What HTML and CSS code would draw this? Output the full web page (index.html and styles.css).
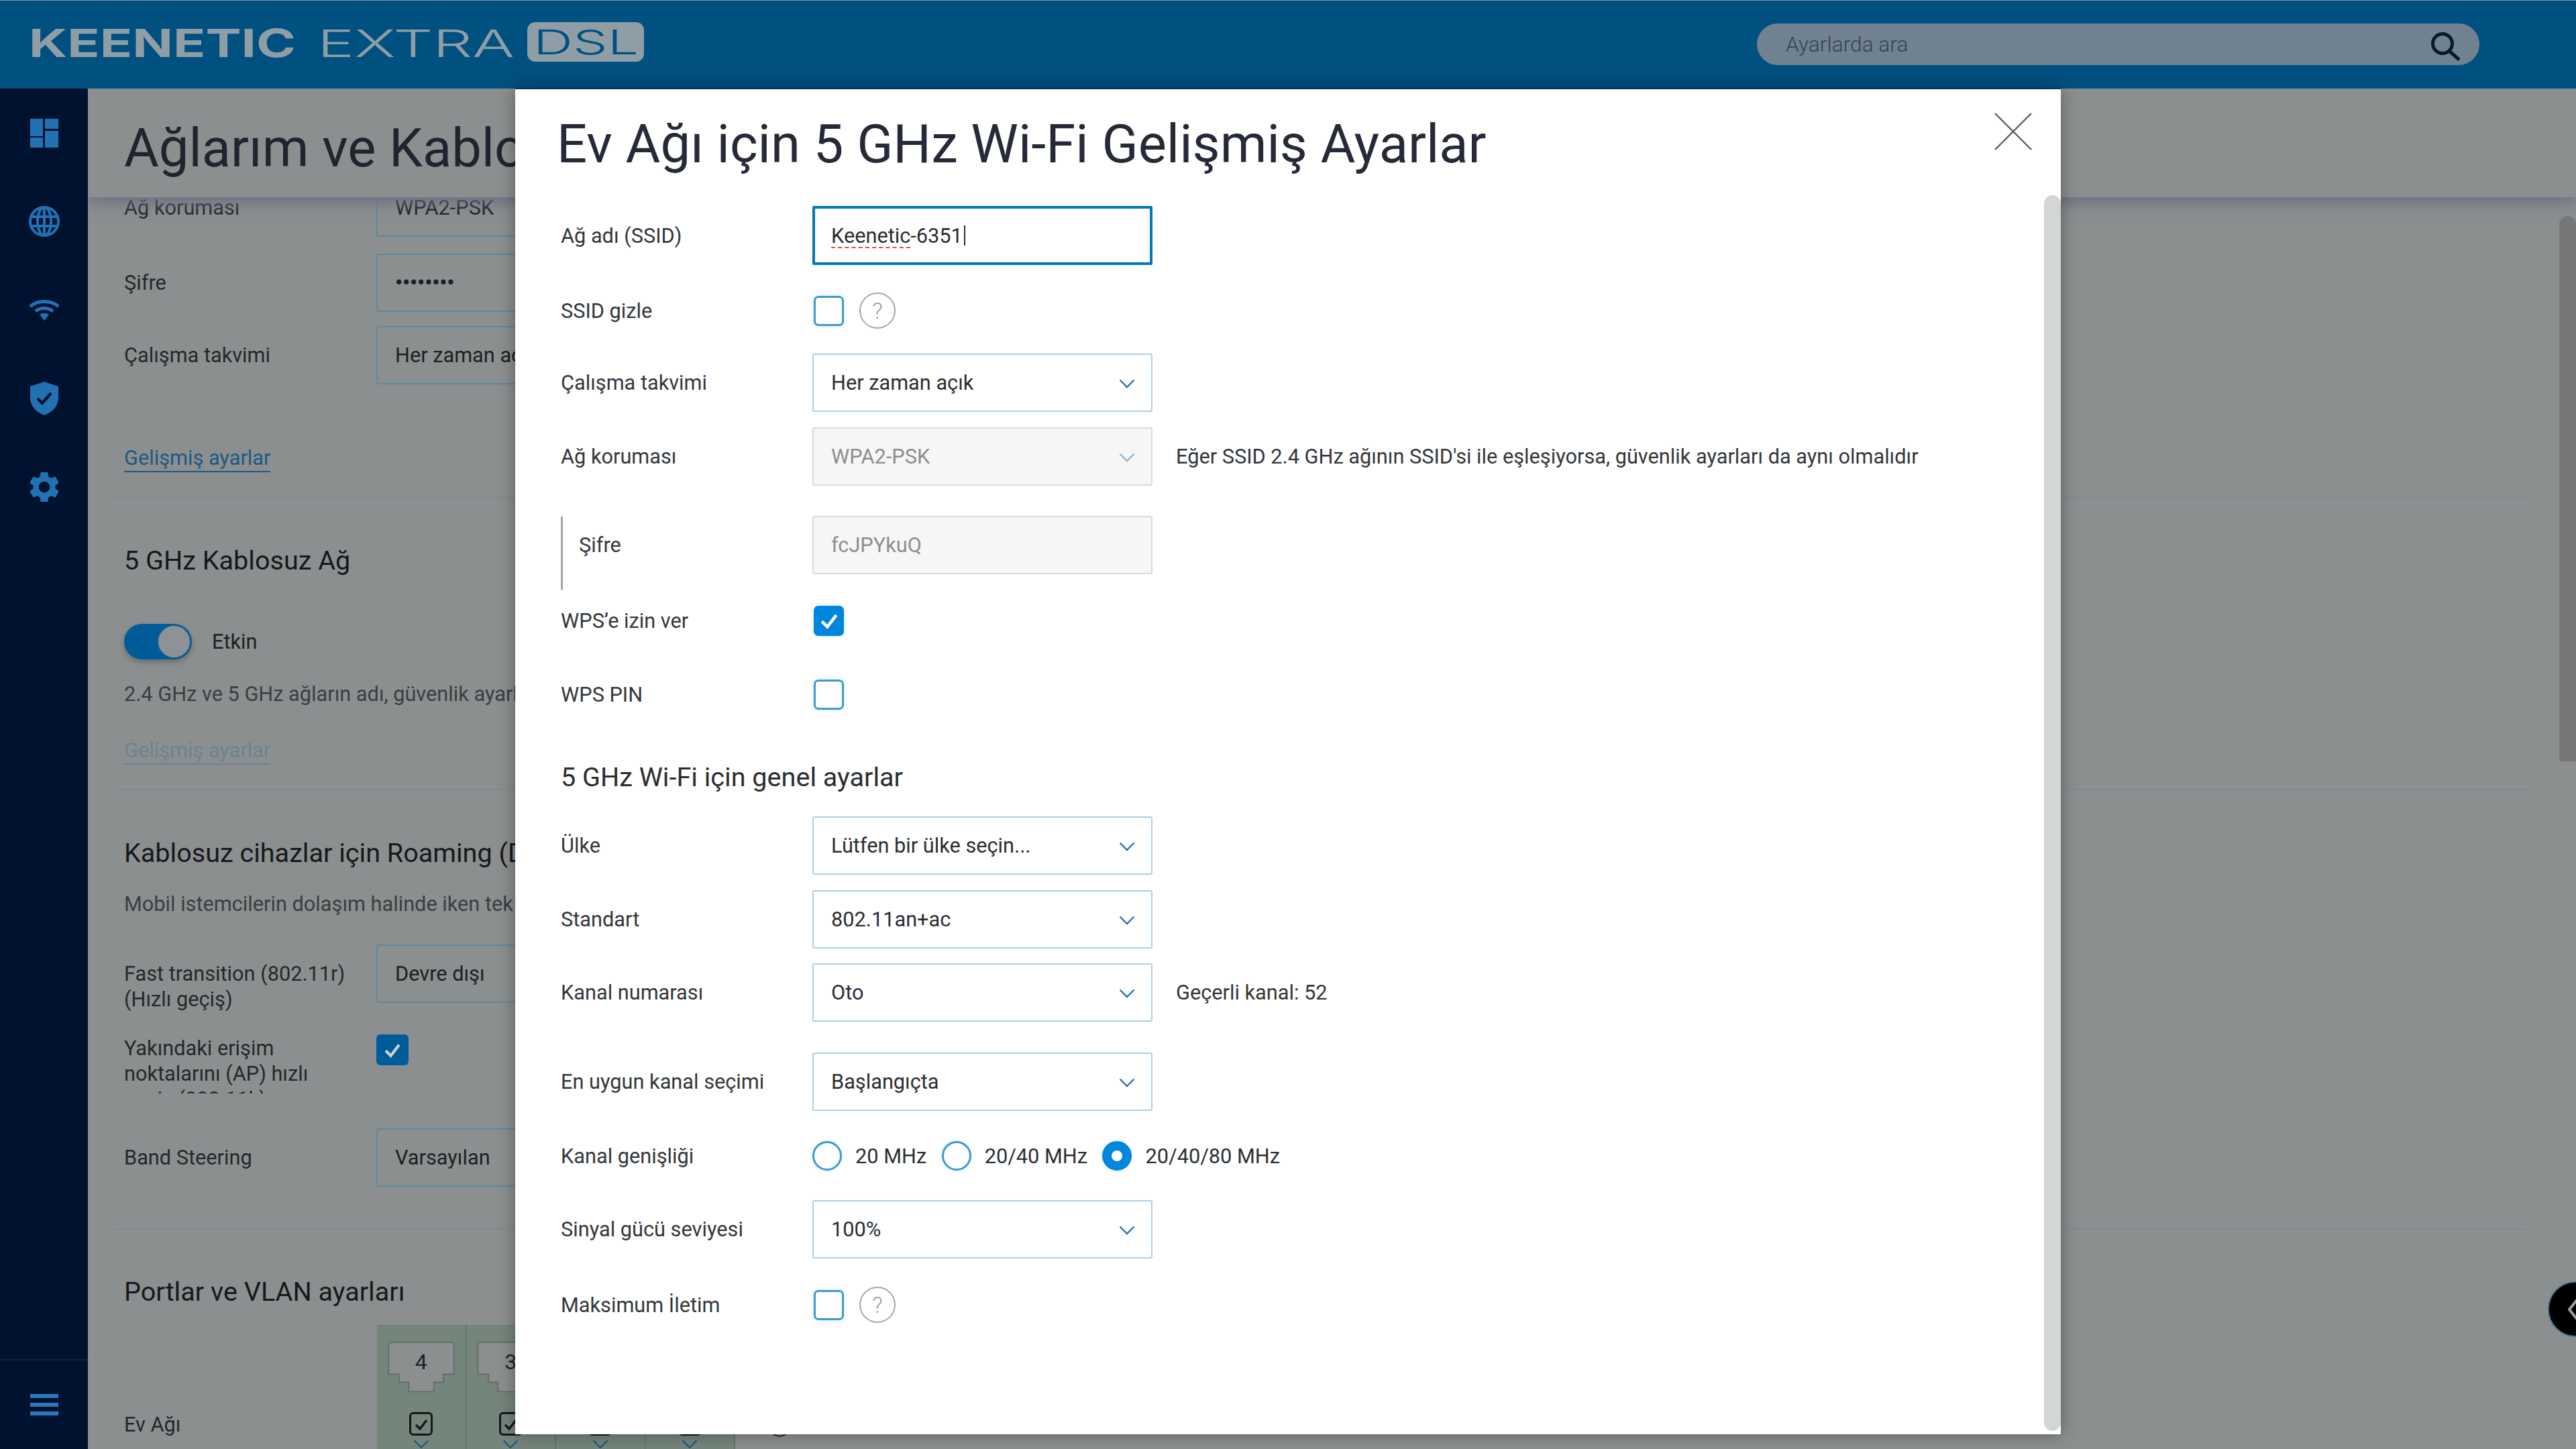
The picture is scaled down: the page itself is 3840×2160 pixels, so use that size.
FILE: index.html
```html
<!DOCTYPE html>
<html lang="tr">
<head>
<meta charset="utf-8">
<title>Keenetic</title>
<link rel="stylesheet" href="styles.css">
</head>
<body>
<svg class="defs" width="0" height="0">
  <symbol id="chev" viewBox="0 0 24 14"><polyline points="1.5,1.5 12,12 22.5,1.5" fill="none" stroke="currentColor" stroke-width="2.4"/></symbol>
  <symbol id="tick" viewBox="0 0 24 24"><polyline points="4,13 10,19 20,6" fill="none" stroke="currentColor" stroke-width="3.4"/></symbol>
</svg>
<div class="app">
  <header class="topbar">
    <svg class="logo" width="920" height="60" viewBox="0 0 920 60">
      <text class="logo-main" x="-2" y="52" textLength="398" lengthAdjust="spacingAndGlyphs">KEENETIC</text>
      <text class="logo-sub" x="428" y="52" textLength="294" lengthAdjust="spacingAndGlyphs">EXTRA</text>
      <rect class="logo-pill" x="741" y="0" width="174" height="59" rx="12"/>
      <text class="logo-dsl" x="750" y="48" textLength="157" lengthAdjust="spacingAndGlyphs">DSL</text>
    </svg>
    <div class="search">
      <span class="search-text">Ayarlarda ara</span>
      <svg class="search-icon" width="46" height="44" viewBox="0 0 46 44"><circle cx="18" cy="18" r="14.5" fill="none" stroke="currentColor" stroke-width="5"/><line x1="28" y1="29" x2="43" y2="42" stroke="currentColor" stroke-width="5"/></svg>
    </div>
  </header>
  <div class="body">
    <nav class="sidebar">
      <a class="nav-item"><svg width="42" height="43" viewBox="0 0 42 43"><rect x="0" y="0" width="19" height="26"/><rect x="0" y="28" width="19" height="15"/><rect x="22" y="0" width="20" height="15"/><rect x="22" y="18" width="20" height="25"/></svg></a>
      <a class="nav-item"><svg width="46" height="46" viewBox="0 0 46 46"><g fill="none" stroke="currentColor" stroke-width="4"><circle cx="23" cy="23" r="21"/><ellipse cx="23" cy="23" rx="10" ry="21"/><line x1="3" y1="16" x2="43" y2="16"/><line x1="3" y1="30" x2="43" y2="30"/><line x1="23" y1="2" x2="23" y2="44"/></g></svg></a>
      <a class="nav-item"><svg width="46" height="32" viewBox="0 0 46 32"><g fill="none" stroke="currentColor" stroke-width="5"><path d="M2 11 C13 1 33 1 44 11"/><path d="M10 18 C17 12 29 12 36 18"/></g><path class="fill" d="M16 23 C20 20 26 20 30 23 L23 32 Z"/></svg></a>
      <a class="nav-item"><svg width="42" height="50" viewBox="0 0 42 50"><path class="fill" d="M21 0 L42 7 V24 C42 37 32 46 21 50 C10 46 0 37 0 24 V7 Z"/><polyline points="11,25 18,32 31,17" fill="none" stroke="#00122f" stroke-width="4.5"/></svg></a>
      <a class="nav-item"><svg width="46" height="46" viewBox="2 2 20 20"><path class="fill" d="M19.14 12.94c.04-.3.06-.61.06-.94 0-.32-.02-.64-.07-.94l2.03-1.58c.18-.14.23-.41.12-.61l-1.92-3.32c-.12-.22-.37-.29-.59-.22l-2.39.96c-.5-.38-1.03-.7-1.62-.94l-.36-2.54c-.04-.24-.24-.41-.48-.41h-3.84c-.24 0-.43.17-.47.41l-.36 2.54c-.59.24-1.13.57-1.62.94l-2.39-.96c-.22-.08-.47 0-.59.22L2.74 8.87c-.12.21-.08.47.12.61l2.03 1.58c-.05.3-.09.63-.09.94s.02.64.07.94l-2.03 1.58c-.18.14-.23.41-.12.61l1.92 3.32c.12.22.37.29.59.22l2.39-.96c.5.38 1.03.7 1.62.94l.36 2.54c.05.24.24.41.48.41h3.84c.24 0 .44-.17.47-.41l.36-2.54c.59-.24 1.13-.56 1.62-.94l2.39.96c.22.08.47 0 .59-.22l1.92-3.32c.12-.22.07-.47-.12-.61l-2.01-1.58zM12 15.6c-1.98 0-3.6-1.62-3.6-3.6s1.62-3.6 3.6-3.6 3.6 1.62 3.6 3.6-1.62 3.6-3.6 3.6z"/></svg></a>
      <div class="nav-foot"><span class="burger"></span></div>
    </nav>
    <main class="page">
      <div class="page-head"><h1 class="page-title">Ağlarım ve Kablosuz Ağ</h1></div>
      <div class="page-scroll">
        <div class="bg-row first"><label class="bg-label">Ağ koruması</label><div class="bg-input">WPA2-PSK</div></div>
        <div class="bg-row r25"><label class="bg-label">Şifre</label><div class="bg-input dots">••••••••</div></div>
        <div class="bg-row r21"><label class="bg-label">Çalışma takvimi</label><div class="bg-input">Her zaman açık</div></div>
        <a class="bg-link l92">Gelişmiş ayarlar</a>
        <hr class="bg-rule">
        <h3 class="bg-h3">5 GHz Kablosuz Ağ</h3>
        <div class="toggle-row"><span class="toggle"><span class="knob"></span></span><span class="toggle-label">Etkin</span></div>
        <p class="bg-p p33">2.4 GHz ve 5 GHz ağların adı, güvenlik ayarları ve şifresi aynı olmalıdır</p>
        <a class="bg-link faded">Gelişmiş ayarlar</a>
        <hr class="bg-rule">
        <h3 class="bg-h3">Kablosuz cihazlar için Roaming (Dolaşım)</h3>
        <p class="bg-p p32">Mobil istemcilerin dolaşım halinde iken tek bir ağda kalması için</p>
        <div class="bg-row r41"><label class="bg-label two-line">Fast transition (802.11r)<br>(Hızlı geçiş)</label><div class="bg-input">Devre dışı</div></div>
        <div class="bg-row clip"><label class="bg-label">Yakındaki erişim<br>noktalarını (AP) hızlı<br>geçiş (802.11k)</label><span class="bg-check"><svg width="30" height="30"><use href="#tick"/></svg></span></div>
        <div class="bg-row r52"><label class="bg-label">Band Steering</label><div class="bg-input">Varsayılan</div></div>
        <hr class="bg-rule r62">
        <h3 class="bg-h3 h68">Portlar ve VLAN ayarları</h3>
        <div class="ports">
          <span class="ports-label">Ev Ağı</span>
          <div class="port"><svg class="rj" width="102" height="78" viewBox="0 0 102 78"><path d="M6 2 H96 Q100 2 100 6 V50 H84 V62 H70 V76 H32 V62 H18 V50 H2 V6 Q2 2 6 2 Z"/></svg><span class="port-num">4</span><span class="port-check"><svg width="24" height="24"><use href="#tick"/></svg></span><svg class="port-chev" width="24" height="14"><use href="#chev"/></svg></div>
          <div class="port"><svg class="rj" width="102" height="78" viewBox="0 0 102 78"><path d="M6 2 H96 Q100 2 100 6 V50 H84 V62 H70 V76 H32 V62 H18 V50 H2 V6 Q2 2 6 2 Z"/></svg><span class="port-num">3</span><span class="port-check"><svg width="24" height="24"><use href="#tick"/></svg></span><svg class="port-chev" width="24" height="14"><use href="#chev"/></svg></div>
          <div class="port"><svg class="rj" width="102" height="78" viewBox="0 0 102 78"><path d="M6 2 H96 Q100 2 100 6 V50 H84 V62 H70 V76 H32 V62 H18 V50 H2 V6 Q2 2 6 2 Z"/></svg><span class="port-num">2</span><span class="port-check"><svg width="24" height="24"><use href="#tick"/></svg></span><svg class="port-chev" width="24" height="14"><use href="#chev"/></svg></div>
          <div class="port"><svg class="rj" width="102" height="78" viewBox="0 0 102 78"><path d="M6 2 H96 Q100 2 100 6 V50 H84 V62 H70 V76 H32 V62 H18 V50 H2 V6 Q2 2 6 2 Z"/></svg><span class="port-num">1</span><span class="port-check"><svg width="24" height="24"><use href="#tick"/></svg></span><svg class="port-chev" width="24" height="14"><use href="#chev"/></svg></div>
          <span class="ports-mark"></span>
        </div>
      </div>
      <span class="page-scrollbar"></span>
      <span class="fab"><svg width="14" height="36" viewBox="0 0 14 36"><polyline points="14,3 2,18 14,33" fill="none" stroke="#9a9d9d" stroke-width="4"/></svg></span>
    </main>
  </div>

  <section class="modal">
    <h2 class="modal-title">Ev Ağı için 5 GHz Wi-Fi Gelişmiş Ayarlar</h2>
    <svg class="modal-close" width="56" height="56" viewBox="0 0 56 56"><g stroke="#5a5c60" stroke-width="2.4"><line x1="1" y1="1" x2="55" y2="55"/><line x1="55" y1="1" x2="1" y2="55"/></g></svg>
    <form class="form">
      <div class="row"><label class="label">Ağ adı (SSID)</label><div class="field focus"><span class="spell">Keenetic</span>-6351<span class="caret"></span></div></div>
      <div class="row"><label class="label">SSID gizle</label><span class="check"></span><span class="help">?</span></div>
      <div class="row"><label class="label">Çalışma takvimi</label><div class="field">Her zaman açık<svg class="chev" width="24" height="14"><use href="#chev"/></svg></div></div>
      <div class="row"><label class="label">Ağ koruması</label><div class="field off">WPA2-PSK<svg class="chev" width="24" height="14"><use href="#chev"/></svg></div><span class="note">Eğer SSID 2.4 GHz ağının SSID'si ile eşleşiyorsa, güvenlik ayarları da aynı olmalıdır</span></div>
      <div class="row"><label class="label nested">Şifre</label><div class="field off">fcJPYkuQ</div></div>
      <div class="row"><label class="label">WPS’e izin ver</label><span class="check on"><svg width="32" height="32"><use href="#tick"/></svg></span></div>
      <div class="row"><label class="label">WPS PIN</label><span class="check"></span></div>
      <h3 class="form-h3">5 GHz Wi-Fi için genel ayarlar</h3>
      <div class="row"><label class="label">Ülke</label><div class="field">Lütfen bir ülke seçin...<svg class="chev" width="24" height="14"><use href="#chev"/></svg></div></div>
      <div class="row"><label class="label">Standart</label><div class="field">802.11an+ac<svg class="chev" width="24" height="14"><use href="#chev"/></svg></div></div>
      <div class="row"><label class="label">Kanal numarası</label><div class="field">Oto<svg class="chev" width="24" height="14"><use href="#chev"/></svg></div><span class="note">Geçerli kanal: 52</span></div>
      <div class="row"><label class="label">En uygun kanal seçimi</label><div class="field">Başlangıçta<svg class="chev" width="24" height="14"><use href="#chev"/></svg></div></div>
      <div class="row"><label class="label">Kanal genişliği</label>
        <div class="radios">
          <span class="radio"></span><span class="radio-text">20 MHz</span>
          <span class="radio"></span><span class="radio-text">20/40 MHz</span>
          <span class="radio on"></span><span class="radio-text">20/40/80 MHz</span>
        </div>
      </div>
      <div class="row"><label class="label">Sinyal gücü seviyesi</label><div class="field">100%<svg class="chev" width="24" height="14"><use href="#chev"/></svg></div></div>
      <div class="row"><label class="label">Maksimum İletim</label><span class="check"></span><span class="help">?</span></div>
    </form>
    <span class="modal-scrollbar"></span>
  </section>
</div>
</body>
</html>
```

FILE: styles.css
```css
* { box-sizing: border-box; }
html, body { margin: 0; padding: 0; }
body { width: 3840px; height: 2160px; overflow: hidden; font-family: Roboto, "Noto Sans", sans-serif; font-size: 30.72px; color: #2c3034; background: #8c8f8f; }
.defs { position: absolute; }

.app { position: relative; width: 3840px; height: 2160px; display: flex; flex-direction: column; }

/* top bar */
.topbar { flex: none; height: 132px; background: #005080; border-top: 1px solid #7f98ab; display: flex; align-items: center; justify-content: space-between; padding: 0 144px 0 45px; }
.logo { margin-top: -8px; overflow: visible; }
.logo-main { font-family: Inter, sans-serif; font-weight: 700; font-size: 58px; fill: #8f9ea6; }
.logo-sub { font-family: Inter, sans-serif; font-weight: 300; font-size: 56px; fill: #8f9ea6; }
.logo-pill { fill: #8f9ea6; }
.logo-dsl { font-family: Inter, sans-serif; font-weight: 300; font-size: 51px; fill: #005080; }
.search { width: 1077px; height: 62px; margin-top: -1px; background: #708290; border-radius: 31px; display: flex; align-items: center; justify-content: space-between; padding: 0 27px 0 43px; }
.search-text { font-size: 31.7px; font-weight: 300; color: #36434f; }
.search-icon { color: #061b30; margin-top: 6px; }

.body { flex: 1; display: flex; min-height: 0; }

/* sidebar */
.sidebar { flex: none; width: 131px; background: #00122f; display: flex; flex-direction: column; color: #2272b2; }
.nav-item { height: 132px; display: flex; align-items: center; justify-content: center; }
.nav-item svg { fill: currentColor; }
.nav-item .fill { fill: currentColor; }
.nav-foot { margin-top: auto; height: 134px; border-top: 2px solid #0f2542; display: flex; align-items: center; justify-content: center; }
.burger { width: 42px; height: 32px; border-top: 6px solid #2b79b8; border-bottom: 6px solid #2b79b8; position: relative; }
.burger::after { content: ""; position: absolute; left: 0; right: 0; top: 7px; height: 6px; background: #2b79b8; }

/* page behind the dialog */
.page { position: relative; flex: 1; min-width: 0; display: flex; flex-direction: column; overflow: hidden; }
.page-head { position: relative; z-index: 1; flex: none; height: 162px; background: #8c8f8f; box-shadow: 0 8px 22px #6c6f80; padding: 0 0 0 54px; display: flex; align-items: center; }
.page-title { margin: 14px 0 0; font-size: 79.5px; font-weight: 400; color: #21242e; white-space: nowrap; }
.page-scroll { flex: 1; min-height: 0; overflow: hidden; padding: 0 72px 0 37px; margin-top: 0; }
.bg-row { display: flex; align-items: center; padding-left: 17px; height: 87px; }
.bg-row.first { margin-top: -28px; }
.r25 { margin-top: 25px; }
.r21 { margin-top: 21px; }
.r41 { margin-top: 41px; }
.r52 { margin-top: 52px; }
.bg-row.clip { margin-top: 47px; height: 88px; overflow: hidden; align-items: flex-start; padding-top: 2px; }
.bg-label { flex: none; width: 376px; line-height: 38px; color: #25282b; white-space: nowrap; }
.bg-label.two-line { margin-top: 39px; }
.bg-input { width: 600px; height: 87px; padding-left: 26px; border: 2px solid #5e87a1; border-radius: 3px; display: flex; align-items: center; color: #1d2024; }
.dots { font-weight: 700; }
.bg-check { width: 48px; height: 46px; margin-top: -2px; border-radius: 6px; background: #005c99; color: #c8d3da; display: flex; align-items: center; justify-content: center; }
.bg-link { display: block; width: fit-content; margin-left: 17px; height: 39px; line-height: 36px; color: #1d5a82; border-bottom: 2px solid #1d5a82; }
.l92 { margin-top: 92px; }
.bg-link.faded { margin-top: 47px; color: #6a8494; border-bottom-color: #6a8494; }
.bg-rule { border: 0; height: 2px; margin: 36px 0 0; background: #7e8c90; }
.bg-rule.r62 { margin-top: 62px; }
.bg-h3 { margin: 69px 0 0 17px; height: 50px; line-height: 50px; font-size: 39.6px; font-weight: 400; color: #15181c; white-space: nowrap; }
.bg-h3.h68 { margin-top: 68px; }
.toggle-row { margin: 69px 0 0 17px; display: flex; align-items: center; gap: 30px; }
.toggle { width: 101px; height: 53px; border-radius: 27px; background: #005c99; box-shadow: 0 4px 8px #6a6d70; display: block; position: relative; }
.knob { position: absolute; right: 1px; top: 1px; width: 51px; height: 51px; border-radius: 50%; background: #8f9294; border: 2px solid #0e5f92; }
.toggle-label { color: #1d2024; }
.bg-p { margin: 0 0 0 17px; height: 38px; line-height: 38px; color: #3a3e42; white-space: nowrap; }
.p33 { margin-top: 33px; }
.p32 { margin-top: 32px; }

.ports { margin: 24px 0 0 17px; display: flex; align-items: flex-start; position: relative; }
.ports-label { flex: none; width: 377px; margin-top: 130px; line-height: 38px; color: #25282b; }
.port { width: 133.5px; height: 185px; background: #74857c; border-right: 2px solid #66756e; position: relative; display: flex; flex-direction: column; align-items: center; }
.rj { margin-top: 24px; fill: #8c8f8f; stroke: #666e6c; stroke-width: 2; }
.port-num { position: absolute; top: 33px; left: 0; right: 0; text-align: center; line-height: 44px; font-size: 32px; color: #1d2024; }
.port-check { width: 35px; height: 35px; margin-top: 29px; border: 3px solid #14181a; border-radius: 6px; display: flex; align-items: center; justify-content: center; color: #14181a; }
.port-chev { margin-top: 6px; color: #1d5a82; }
.ports-mark { position: absolute; left: 962px; top: 137px; width: 30px; height: 30px; border: 2px solid #2a2d30; border-radius: 50%; }

.page-scrollbar { position: absolute; z-index: 2; right: 0; top: 190px; width: 25px; height: 813px; border-radius: 13px 13px 0 0; background: #777779; }
.fab { position: absolute; z-index: 2; right: -41px; top: 1778px; width: 83px; height: 83px; border-radius: 50%; background: #000; border: 2px solid #3b6f86; display: flex; align-items: center; padding-left: 28px; }

/* dialog */
.modal { position: absolute; z-index: 5; left: 768px; top: 132px; width: 2304px; height: 2006px; background: #fff; border-top: 1px solid #0a2050; box-shadow: 0 0 24px rgba(0, 0, 0, .35); }
.modal-title { margin: 0; height: 162px; padding: 0 0 0 62px; display: flex; align-items: center; font-size: 79.6px; font-weight: 400; color: #262a38; white-space: nowrap; }
.modal-close { position: absolute; left: 2205px; top: 35px; }
.modal-scrollbar { position: absolute; right: 0; top: 158px; width: 25px; height: 1842px; border-radius: 13px; background: #d4d6d4; }

.form { display: grid; padding-left: 68px; margin-top: 1px; grid-template-rows: 110px 114px 100px 120px 144px 82px 138px 108px 96px 124px 94px 172px 50px 168px 58px; }
.row { display: flex; align-items: center; min-height: 0; }
.label { flex: none; width: 375px; color: #33373a; white-space: nowrap; }
.label.nested { height: 109px; margin-top: 24px; padding: 0 0 24px 24px; border-left: 3px solid #a2a4a6; display: flex; align-items: center; }
.field { position: relative; flex: none; width: 507px; height: 87px; padding-left: 26px; border: 2px solid #a9d0ea; border-radius: 3px; display: flex; align-items: center; color: #2a2e32; white-space: nowrap; }
.field.focus { height: 88px; border: 4px solid #0079c1; border-radius: 2px; padding-left: 24px; }
.field.off { background: #f6f6f6; border-color: #dadada; color: #8c8e90; }
.field.off .chev { color: #8fb4d2; }
.chev { position: absolute; right: 24px; top: 36px; color: #2d6faa; }
.spell { text-decoration: underline dashed #e5484d 2px; text-underline-offset: 7px; }
.caret { width: 2px; height: 30px; margin-left: 2px; background: #2a2e32; }
.note { margin-left: 35px; color: #33373a; white-space: nowrap; }
.check { flex: none; width: 45px; height: 45px; margin-left: 2px; border: 3px solid #3d9ad1; border-radius: 7px; box-shadow: 0 0 6px #cfe9f8; color: #fff; display: flex; align-items: center; justify-content: center; }
.check.on { background: #0086dc; border-color: #0086dc; }
.help { flex: none; width: 54px; height: 54px; margin-left: 23px; border: 2px solid #a6a6a6; border-radius: 50%; display: flex; align-items: center; justify-content: center; font-size: 34px; font-weight: 300; color: #a0a0a0; }
.form-h3 { margin: 0; align-self: center; font-size: 39.6px; font-weight: 400; color: #2a2e32; white-space: nowrap; }
.radios { display: flex; align-items: center; }
.radio { flex: none; width: 44px; height: 44px; border: 3px solid #3d9ad1; border-radius: 50%; box-shadow: 0 0 5px #d3ecfa; }
.radio.on { border: 14px solid #0086dc; }
.radio-text { margin: 0 22.5px 0 20px; white-space: nowrap; }
```
